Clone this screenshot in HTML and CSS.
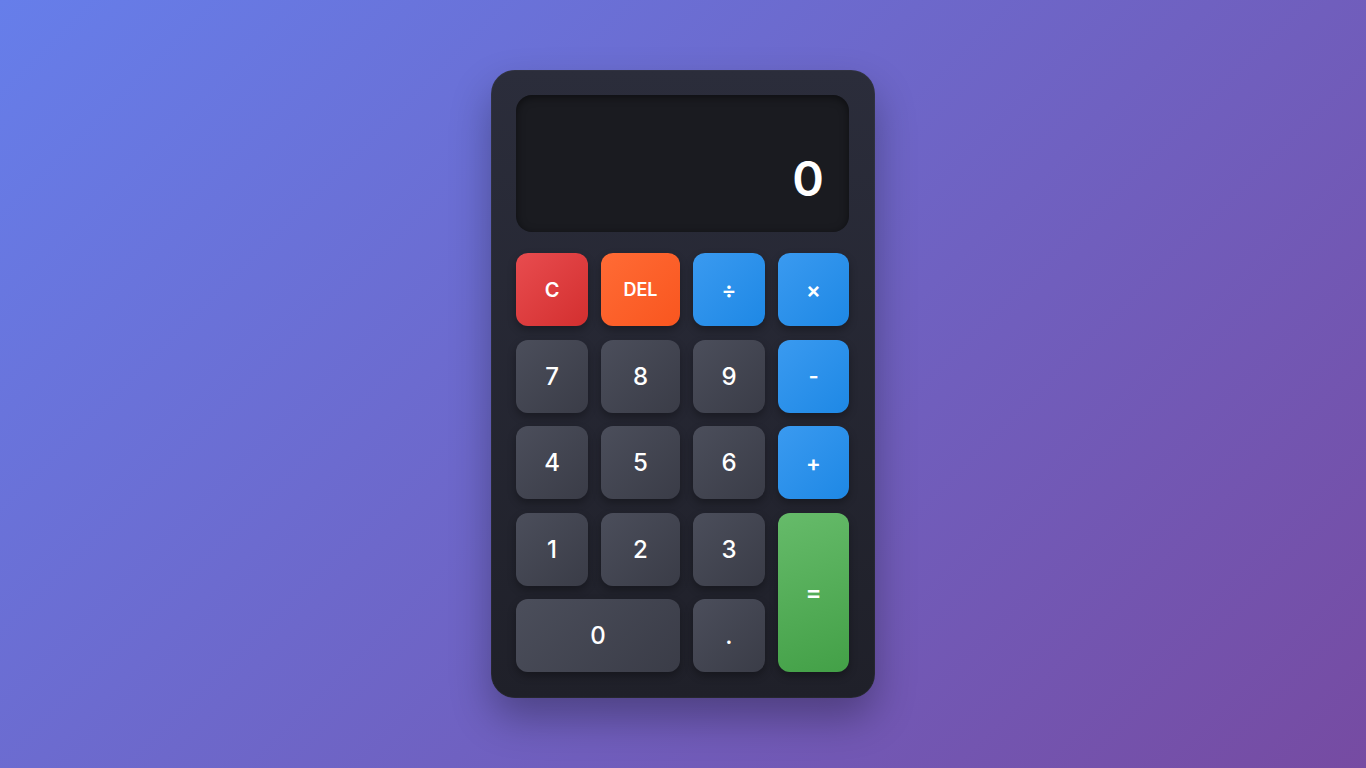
FILE: index.html
```html
<!DOCTYPE html>
<html lang="en">
<head>
<meta charset="utf-8">
<title>Calculator</title>
<link rel="stylesheet" href="styles.css">
</head>
<body>
<main class="page">
  <div class="calculator">
    <div class="display"><span class="display-value">0</span></div>
    <div class="keys">
      <button class="key key-clear">C</button>
      <button class="key key-del">DEL</button>
      <button class="key key-op">÷</button>
      <button class="key key-op">×</button>
      <button class="key">7</button>
      <button class="key">8</button>
      <button class="key">9</button>
      <button class="key key-op">-</button>
      <button class="key">4</button>
      <button class="key">5</button>
      <button class="key">6</button>
      <button class="key key-op">+</button>
      <button class="key">1</button>
      <button class="key">2</button>
      <button class="key">3</button>
      <button class="key key-equals">=</button>
      <button class="key key-zero">0</button>
      <button class="key">.</button>
    </div>
  </div>
</main>
</body>
</html>
```

FILE: styles.css
```css
* { box-sizing: border-box; }
html, body { margin: 0; height: 100%; }
body {
  font-family: Inter, "Noto Sans", sans-serif;
  background: linear-gradient(135deg, #667eea 0%, #764ba2 100%);
  min-height: 768px;
}
.page {
  height: 768px;
  display: flex;
  align-items: center;
  justify-content: center;
}
.calculator {
  width: 384px;
  height: 628px;
  padding: 25px 26px 26px 25px;
  border-radius: 24px;
  background: linear-gradient(180deg, #2b2d3b 0%, #1f2029 100%);
  box-shadow: 0 20px 40px rgba(0, 0, 0, 0.3), 0 0 0 1px rgba(255,255,255,0.03) inset;
  display: flex;
  flex-direction: column;
  gap: 21px;
}
.display {
  height: 137px;
  border-radius: 16px;
  background: #1a1b20;
  box-shadow: inset 0 2px 8px rgba(0, 0, 0, 0.5);
  display: flex;
  align-items: flex-end;
  justify-content: flex-end;
  padding: 0 25px 29px;
}
.display-value {
  color: #ffffff;
  font-size: 48px;
  font-weight: 600;
  line-height: 1;
}
.keys {
  display: grid;
  grid-template-columns: 72fr 79fr 72fr 71fr;
  grid-auto-rows: 73px;
  column-gap: 13px;
  row-gap: 13.5px;
}
.key {
  border: none;
  border-radius: 12px;
  font-family: inherit;
  font-size: 24px;
  font-weight: 500;
  color: #ffffff;
  background: linear-gradient(135deg, #4b4e5b 0%, #3a3c47 100%);
  box-shadow: 0 4px 8px rgba(0, 0, 0, 0.3);
  padding: 0;
  display: flex;
  align-items: center;
  justify-content: center;
}
.key-clear {
  background: linear-gradient(135deg, #e84c4f 0%, #d32f2f 100%);
  font-size: 20px;
  font-weight: 600;
}
.key-del {
  background: linear-gradient(135deg, #ff6b35 0%, #f9561f 100%);
  font-size: 18px;
  font-weight: 600;
}
.key-op {
  background: linear-gradient(135deg, #3a9af0 0%, #1e88e5 100%);
  font-size: 22px;
  font-weight: 600;
}
.key-equals {
  grid-column: 4;
  grid-row: 4 / span 2;
  background: linear-gradient(160deg, #66bb6a 0%, #43a047 100%);
  font-size: 24px;
  font-weight: 600;
}
.key-zero {
  grid-column: 1 / span 2;
}
```
